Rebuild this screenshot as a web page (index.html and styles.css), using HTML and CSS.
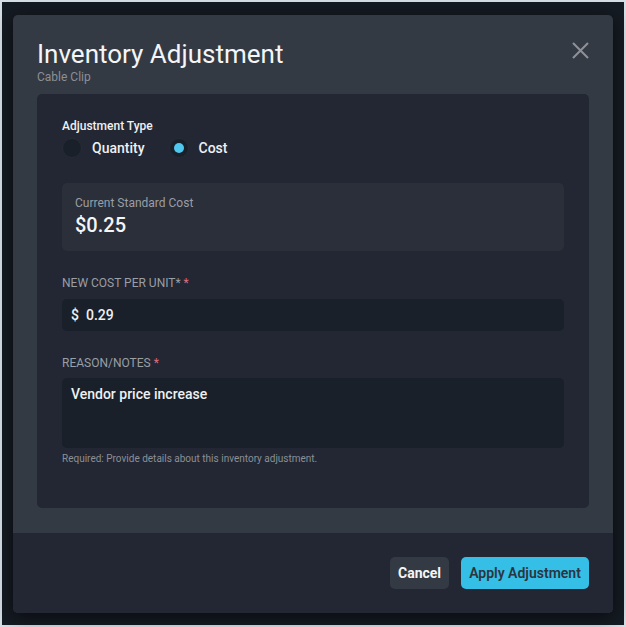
FILE: index.html
```html
<!DOCTYPE html>
<html lang="en">
<head>
<meta charset="utf-8">
<title>Inventory Adjustment</title>
<link rel="stylesheet" href="styles.css">
</head>
<body>
<div class="backdrop">
  <div class="modal">
    <div class="modal-header">
      <div class="titles">
        <h1 class="title">Inventory Adjustment</h1>
        <div class="subtitle">Cable Clip</div>
      </div>
      <button class="close" aria-label="Close">
        <svg width="17" height="17" viewBox="0 0 17 17"><path d="M1 1 L16 16 M16 1 L1 16" stroke="#8e9196" stroke-width="2" fill="none"/></svg>
      </button>
    </div>
    <div class="card">
      <div class="field-title">Adjustment Type</div>
      <div class="radios">
        <label class="radio"><span class="dot"></span>Quantity</label>
        <label class="radio"><span class="dot checked"></span>Cost</label>
      </div>
      <div class="current">
        <div class="current-label">Current Standard Cost</div>
        <div class="current-value">$0.25</div>
      </div>
      <div class="label">NEW COST PER UNIT* <span class="req">*</span></div>
      <div class="input"><span class="prefix">$</span><span>0.29</span></div>
      <div class="label label-2">REASON/NOTES <span class="req">*</span></div>
      <div class="textarea">Vendor price increase</div>
      <div class="help">Required: Provide details about this inventory adjustment.</div>
    </div>
    <div class="footer">
      <button class="btn btn-cancel">Cancel</button>
      <button class="btn btn-apply">Apply Adjustment</button>
    </div>
  </div>
</div>
</body>
</html>
```
FILE: styles.css
```css
* { box-sizing: border-box; }
html, body { margin: 0; padding: 0; }
body {
  width: 626px;
  height: 627px;
  background: #d5dde5;
  padding: 2px;
  font-family: Roboto, "Noto Sans", sans-serif;
  color: #f0f2f5;
}
.backdrop {
  width: 622px;
  height: 623px;
  background: #151b23;
  padding: 13px 0 0 11px;
}
.modal {
  width: 600px;
  height: 598px;
  background: #343a44;
  border-radius: 5px;
  box-shadow: 0 4px 18px rgba(0,0,0,0.55);
  display: flex;
  flex-direction: column;
  overflow: hidden;
}
.modal-header {
  display: flex;
  justify-content: space-between;
  align-items: flex-start;
  padding: 24px 24px 0 24px;
}
.title {
  margin: 0;
  font-size: 26px;
  line-height: 30px;
  font-weight: 400;
  color: #f4f5f7;
}
.subtitle {
  font-size: 12px;
  line-height: 16px;
  color: #8b8f96;
}
.close {
  background: none;
  border: 0;
  padding: 0;
  margin-top: 3px;
  width: 17px;
  height: 17px;
  display: flex;
}
.card {
  margin: 9px 24px 0 24px;
  background: #222733;
  border-radius: 5px;
  padding: 24px 25px 42px 25px;
  display: flex;
  flex-direction: column;
}
.field-title {
  font-size: 12px;
  line-height: 16px;
  font-weight: 500;
  color: #eef0f3;
}
.radios {
  display: flex;
  gap: 24px;
  margin-top: 4px;
  height: 20px;
}
.radio {
  display: flex;
  align-items: center;
  gap: 10px;
  font-size: 14px;
  line-height: 20px;
  font-weight: 500;
  color: #eef0f3;
}
.dot {
  width: 20px;
  height: 20px;
  border-radius: 50%;
  background: #19202a;
  border: 1px solid #252c36;
  display: flex;
  align-items: center;
  justify-content: center;
}
.dot.checked::after {
  content: "";
  width: 10px;
  height: 10px;
  border-radius: 50%;
  background: #4fc8f0;
}
.current {
  margin-top: 25px;
  background: #2a2f3a;
  border-radius: 5px;
  padding: 12px 13px;
  height: 68px;
}
.current-label {
  font-size: 12px;
  line-height: 16px;
  color: #9a9ea5;
}
.current-value {
  font-size: 20px;
  line-height: 28px;
  font-weight: 500;
  color: #f4f5f7;
}
.label {
  margin-top: 24px;
  font-size: 12px;
  line-height: 16px;
  color: #9a9ea5;
}
.req { color: #e06c7d; }
.input {
  margin-top: 8px;
  height: 32px;
  background: #19202a;
  border-radius: 5px;
  padding: 0 9px;
  display: flex;
  align-items: center;
  gap: 7px;
  font-size: 14px;
  font-weight: 500;
  color: #eef0f3;
}
.textarea {
  margin-top: 7px;
  height: 70px;
  background: #19202a;
  border-radius: 5px;
  padding: 6px 9px;
  font-size: 14px;
  line-height: 20px;
  font-weight: 500;
  color: #eef0f3;
}
.help {
  margin-top: 4px;
  font-size: 10px;
  line-height: 14px;
  color: #8b8f96;
}
.footer {
  margin-top: auto;
  height: 80px;
  background: #222733;
  display: flex;
  justify-content: flex-end;
  align-items: center;
  gap: 12px;
  padding: 0 24px;
}
.btn {
  height: 32px;
  border: 0;
  border-radius: 5px;
  font-family: Roboto, "Noto Sans", sans-serif;
  font-size: 14px;
  font-weight: 700;
  padding: 0 8px;
}
.btn-cancel {
  width: 59px;
  background: #343a43;
  color: #f4f5f7;
}
.btn-apply {
  width: 128px;
  background: #35bee6;
  color: #2b3540;
  font-weight: 600;
}
```
